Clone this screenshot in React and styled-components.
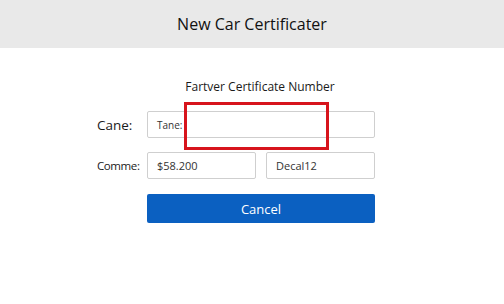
import styled, { createGlobalStyle } from 'styled-components';

const GlobalStyle = createGlobalStyle`
    body {
        margin: 0;
        background: #ffffff;
        font-family: "Open Sans", "Liberation Sans", sans-serif;
        color: #1a1a1a;
    }
`;

const Page = styled.div`
    width: 504px;
    height: 304px;
    background: #ffffff;
    display: flex;
    flex-direction: column;
`;

const Header = styled.div`
    height: 48px;
    background: #e9e9e9;
    display: flex;
    align-items: center;
    justify-content: center;
    font-size: 16px;
    color: #111;
`;

const Subtitle = styled.div`
    margin-top: 30px;
    text-align: center;
    font-size: 12px;
    padding-left: 16px;
    color: #1a1a1a;
`;

const Form = styled.div`
    position: relative;
    margin-top: 16px;
    display: flex;
    flex-direction: column;
    gap: 14px;
    padding-left: 97px;
`;

const Row = styled.div`
    display: flex;
    align-items: center;
    margin-top: ${(p) => p.$extra || 0}px;
`;

const Label = styled.span`
    width: 38px;
    margin-right: 12px;
    white-space: nowrap;
    font-size: ${(p) => p.$size || 12}px;
    letter-spacing: ${(p) => p.$spacing || 0}px;
    color: #1a1a1a;
`;

const Fields = styled.div`
    width: 228px;
    display: flex;
    gap: 10px;
`;

const Field = styled.div`
    flex: 1;
    height: 27px;
    box-sizing: border-box;
    border: 1px solid #cfcfcf;
    border-radius: 2px;
    display: flex;
    align-items: center;
    padding-left: 9px;
    font-size: ${(p) => p.$size || 11}px;
    color: #333;
`;

const Button = styled.button`
    margin-left: 50px;
    width: 228px;
    height: 29px;
    border: none;
    border-radius: 2px;
    background: #0b60c1;
    color: #ffffff;
    font-family: "Open Sans", "Liberation Sans", sans-serif;
    font-size: 13px;
    cursor: pointer;
`;

const Highlight = styled.div`
    position: absolute;
    left: 184px;
    top: -9px;
    width: 145px;
    height: 48px;
    box-sizing: border-box;
    border: 3px solid #d7141c;
`;

const App = () => {
    return (
        <>
            <GlobalStyle />
            <Page>
                <Header>New Car Certificater</Header>
                <Subtitle>Fartver Certificate Number</Subtitle>
                <Form>
                    <Row>
                        <Label $size={13.5}>Cane:</Label>
                        <Fields>
                            <Field $size={10}>Tane:</Field>
                        </Fields>
                    </Row>
                    <Row>
                        <Label $size={11.5} $spacing={-0.4}>Comme:</Label>
                        <Fields>
                            <Field>$58.200</Field>
                            <Field>Decal12</Field>
                        </Fields>
                    </Row>
                    <Row $extra={1}>
                        <Button>Cancel</Button>
                    </Row>
                    <Highlight />
                </Form>
            </Page>
        </>
    );
};

export default App;
